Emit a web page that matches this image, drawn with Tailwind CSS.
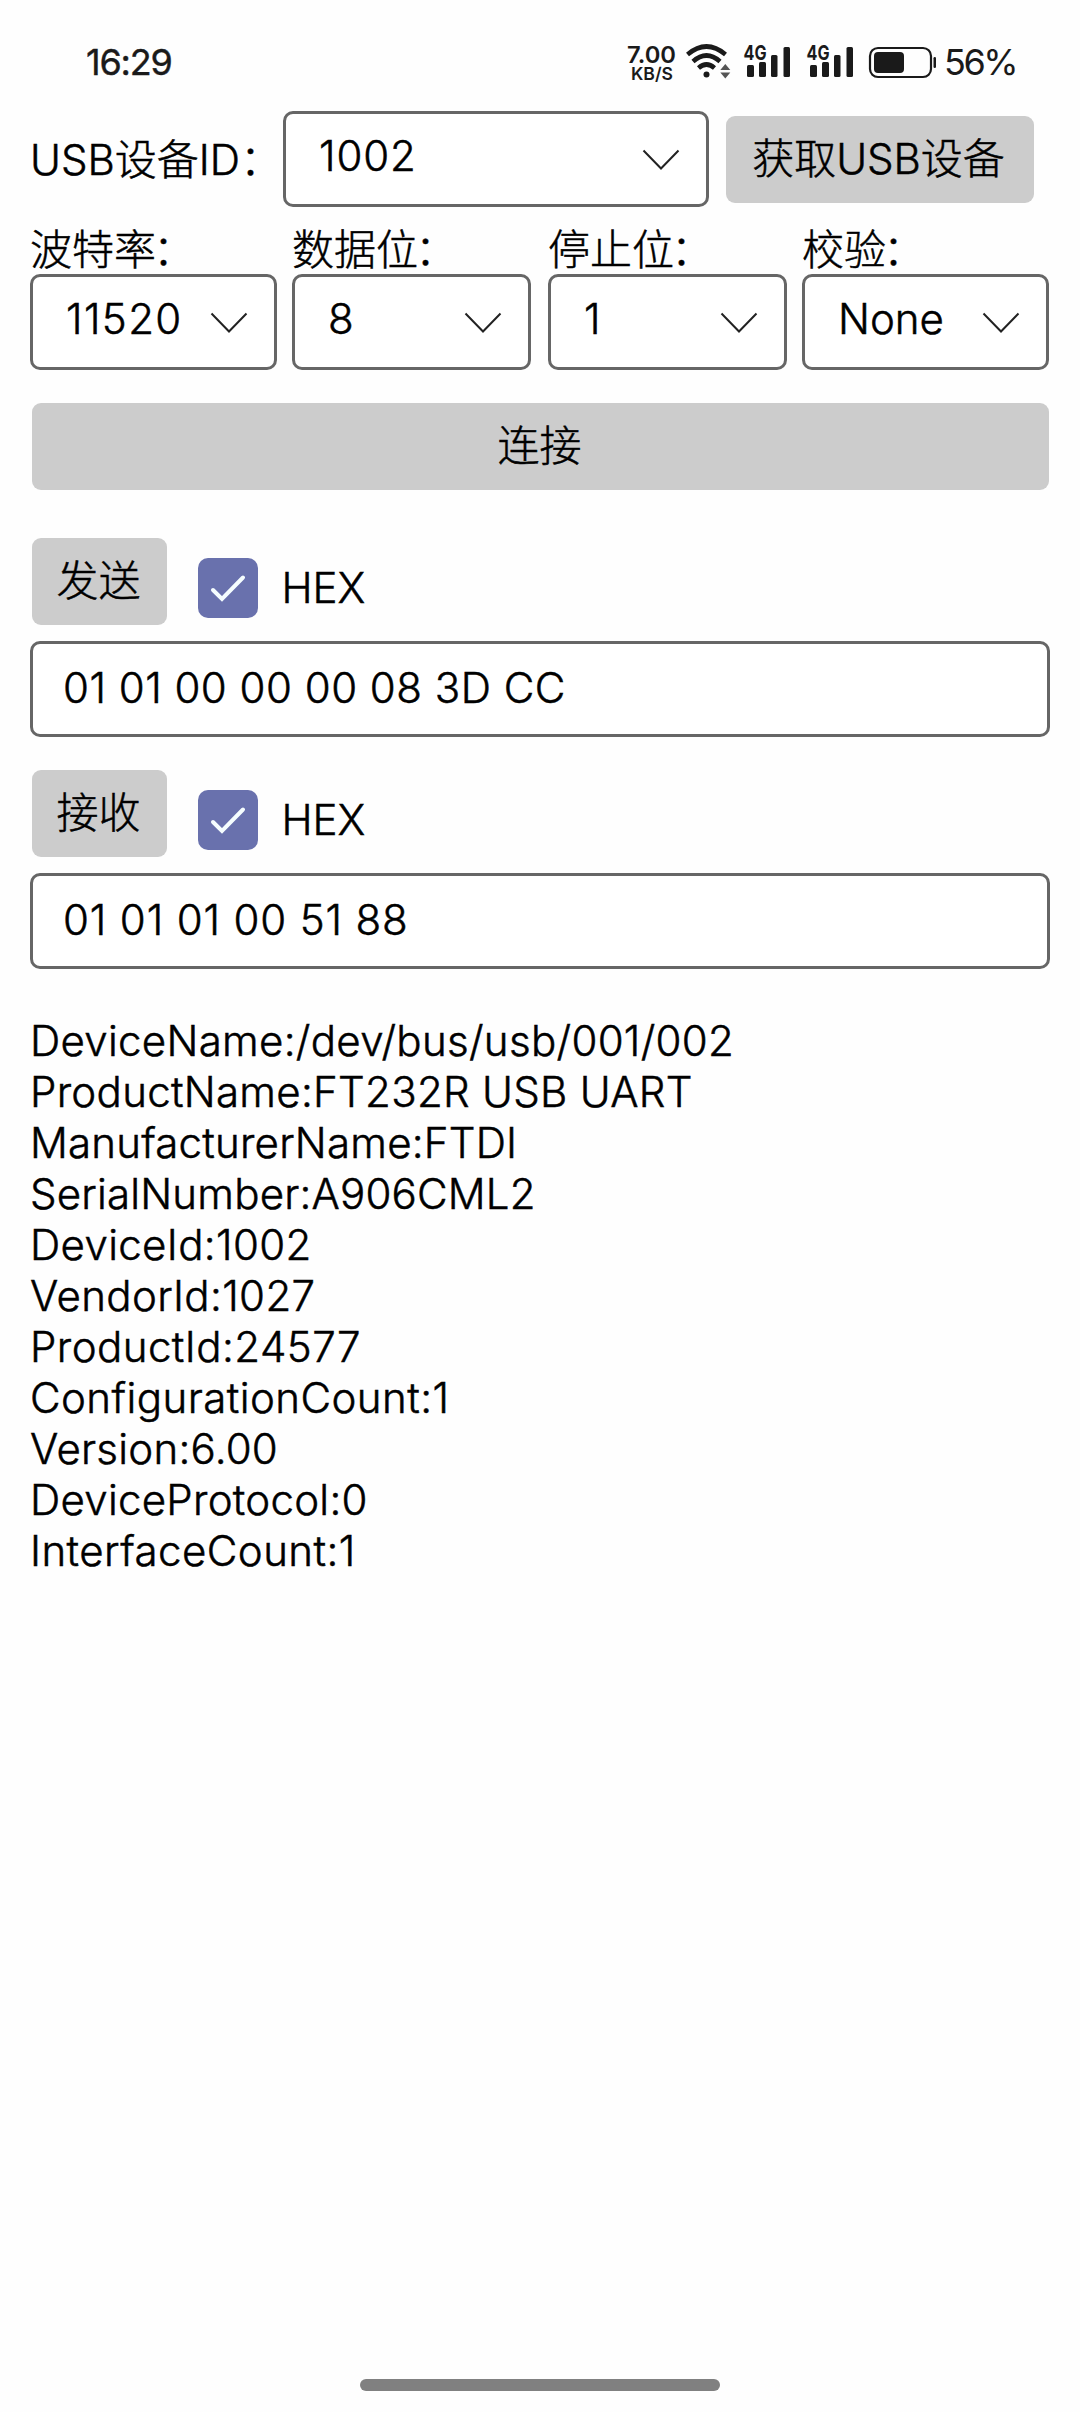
<!DOCTYPE html>
<html lang="zh-CN">
<head>
<meta charset="utf-8">
<title>USB</title>
<script src="https://cdn.jsdelivr.net/npm/@tailwindcss/browser@4"></script>
</head>
<body class="bg-[#fefefe]">
<div class="flex h-[2412px] w-[1080px] flex-col overflow-hidden font-['Inter','Noto_Sans_CJK_SC',sans-serif] text-[42px] leading-[51px] font-light text-black">
  <header class="flex h-[111px] shrink-0 items-start justify-between pt-[40px] pl-[86px] text-[36px] leading-[44px] font-normal text-[#1a1a1a]">
    <span class="tracking-[-1.2px] [-webkit-text-stroke:0.4px]">16:29</span>
    <div class="flex w-[454px] items-start">
      <svg class="h-[44px] w-[316px] shrink-0" viewBox="626 40 316 44" fill="#1a1a1a">
        <text x="627" y="62.500" font-size="23.500" font-weight="600" textLength="49" lengthAdjust="spacingAndGlyphs">7.00</text>
        <text x="631" y="80" font-size="17.5" font-weight="600" textLength="42" lengthAdjust="spacingAndGlyphs">KB/S</text>
        <g fill="none" stroke="#1a1a1a" stroke-width="4.6">
          <path d="M687.5 54.5Q706.500 38.500 725.500 54.500"/>
          <path d="M693 61.500Q706.500 49.500 720 61.500"/>
          <path d="M698.500 68Q706.500 61 714.500 68"/>
        </g>
        <circle cx="706.500" cy="74.500" r="3"/>
        <path d="M725.300 64l5 6h-10zM725.300 78.500l5-6h-10z" fill="#555"/>
        <g>
          <text x="743.500" y="60" font-size="20.500" font-weight="700" textLength="23" lengthAdjust="spacingAndGlyphs">4G</text>
          <rect x="747" y="65" width="7" height="12" rx="1.500"/>
          <rect x="759" y="62" width="7" height="15" rx="1.500"/>
          <rect x="771" y="55" width="6.500" height="22" rx="1.500"/>
          <rect x="783.500" y="47" width="6.500" height="30" rx="1.500"/>
        </g>
        <g transform="translate(63 0)">
          <text x="743.500" y="60" font-size="20.500" font-weight="700" textLength="23" lengthAdjust="spacingAndGlyphs">4G</text>
          <rect x="747" y="65" width="7" height="12" rx="1.500"/>
          <rect x="759" y="62" width="7" height="15" rx="1.500"/>
          <rect x="771" y="55" width="6.500" height="22" rx="1.500"/>
          <rect x="783.500" y="47" width="6.500" height="30" rx="1.500"/>
        </g>
        <rect x="870" y="48" width="61" height="29" rx="8" fill="none" stroke="#1a1a1a" stroke-width="2.200"/>
        <rect x="874" y="52" width="30" height="21" rx="4"/>
        <rect x="933.500" y="57" width="2.500" height="11" rx="1.200"/>
      </svg>
      <span class="pl-[2px] tracking-[-2.5px]">56%</span>
    </div>
  </header>

  <main class="flex flex-col px-[30px] [-webkit-text-stroke:0.5px]">
    <div class="flex h-[96px] items-start">
      <span class="w-[253px] shrink-0 pt-[23px] whitespace-nowrap">USB设备ID：</span>
      <div class="flex h-[96px] w-[426px] items-start justify-between rounded-[10px] border-[3px] border-[#666] bg-white pt-[16px] pr-[26px] pl-[33px]">
        <span class="tracking-[0.9px]">1002</span>
        <svg class="mt-[18px] h-[24px] w-[38px]" viewBox="0 0 38 24" fill="none" stroke="#222" stroke-width="2"><path d="M1.500 2.500L19 20.500L36.500 2.500"/></svg>
      </div>
      <button class="mt-[5px] ml-[16.500px] h-[87px] w-[308px] rounded-[9px] bg-[#ccc] pr-[2px] pb-[2px] whitespace-nowrap">获取USB设备</button>
    </div>

    <div class="mt-[16px] grid grid-cols-[247px_239px_239px_247px] gap-x-[16px]">
      <div>
        <div class="h-[51px] pt-px">波特率<span class="-ml-[3px]">：</span></div>
        <div class="flex h-[96px] items-start justify-between rounded-[10px] border-[3px] border-[#666] bg-white pt-[16px] pr-[26px] pl-[33px]">
          <span class="tracking-[1.4px]">11520</span>
          <svg class="mt-[18px] h-[24px] w-[38px] shrink-0" viewBox="0 0 38 24" fill="none" stroke="#222" stroke-width="2"><path d="M1.500 2.500L19 20.500L36.500 2.500"/></svg>
        </div>
      </div>
      <div class="-ml-px">
        <div class="h-[51px] pt-px">数据位<span class="-ml-[3px]">：</span></div>
        <div class="mr-px flex h-[96px] items-start justify-between rounded-[10px] border-[3px] border-[#666] bg-white pt-[16px] pr-[26px] pl-[33px]">
          <span>8</span>
          <svg class="mt-[18px] h-[24px] w-[38px] shrink-0" viewBox="0 0 38 24" fill="none" stroke="#222" stroke-width="2"><path d="M1.500 2.500L19 20.500L36.500 2.500"/></svg>
        </div>
      </div>
      <div>
        <div class="h-[51px] pt-px">停止位<span class="-ml-[3px]">：</span></div>
        <div class="flex h-[96px] items-start justify-between rounded-[10px] border-[3px] border-[#666] bg-white pt-[16px] pr-[26px] pl-[33px]">
          <span>1</span>
          <svg class="mt-[18px] h-[24px] w-[38px] shrink-0" viewBox="0 0 38 24" fill="none" stroke="#222" stroke-width="2"><path d="M1.500 2.500L19 20.500L36.500 2.500"/></svg>
        </div>
      </div>
      <div class="-ml-px">
        <div class="h-[51px] pt-px">校验<span class="-ml-[3px]">：</span></div>
        <div class="mr-px flex h-[96px] items-start justify-between rounded-[10px] border-[3px] border-[#666] bg-white pt-[16px] pr-[26px] pl-[33px]">
          <span>None</span>
          <svg class="mt-[18px] h-[24px] w-[38px] shrink-0" viewBox="0 0 38 24" fill="none" stroke="#222" stroke-width="2"><path d="M1.500 2.500L19 20.500L36.500 2.500"/></svg>
        </div>
      </div>
    </div>

    <button class="mx-[1.500px] mt-[33px] h-[87px] rounded-[9px] bg-[#ccc] pr-px pb-[2px]">连接</button>

    <div class="mt-[48px] flex h-[103px] items-start pl-[1.500px]">
      <button class="h-[87px] w-[135px] rounded-[9px] bg-[#ccc] pr-px pb-[2px]">发送</button>
      <span class="mt-[20px] ml-[31px] flex size-[60px] items-center justify-center rounded-[10px] bg-[#6971ad]">
        <svg class="size-[60px]" viewBox="0 0 60 60" fill="none" stroke="#f5fdff" stroke-width="4" stroke-linecap="round"><path d="M15 32L24 41L45 19.500"/></svg>
      </span>
      <span class="mt-[24px] ml-[24px]">HEX</span>
    </div>
    <div class="h-[96px] rounded-[10px] border-[3px] border-[#666] bg-white pt-[18px] pl-[30px] tracking-[0.48px] whitespace-pre">01 01 00 00 00 08 3D CC</div>

    <div class="mt-[33px] flex h-[103px] items-start pl-[1.500px]">
      <button class="h-[87px] w-[135px] rounded-[9px] bg-[#ccc] pr-px pb-[2px]">接收</button>
      <span class="mt-[20px] ml-[31px] flex size-[60px] items-center justify-center rounded-[10px] bg-[#6971ad]">
        <svg class="size-[60px]" viewBox="0 0 60 60" fill="none" stroke="#f5fdff" stroke-width="4" stroke-linecap="round"><path d="M15 32L24 41L45 19.500"/></svg>
      </span>
      <span class="mt-[24px] ml-[24px]">HEX</span>
    </div>
    <div class="h-[96px] rounded-[10px] border-[3px] border-[#666] bg-white pt-[18px] pl-[30px] tracking-[0.85px] whitespace-pre">01 01 01 00 51 88</div>

    <div class="mt-[46px] flex flex-col">
      <span class="tracking-[0.3px]">DeviceName:/dev/bus/usb/001/002</span>
      <span class="tracking-[0.3px]">ProductName:FT232R USB UART</span>
      <span class="tracking-[0.22px]">ManufacturerName:FTDI</span>
      <span class="tracking-[0.2px]">SerialNumber:A906CML2</span>
      <span class="tracking-[0.35px]">DeviceId:1002</span>
      <span class="tracking-[0.35px]">VendorId:1027</span>
      <span class="tracking-[0.45px]">ProductId:24577</span>
      <span class="tracking-[0.45px]">ConfigurationCount:1</span>
      <span class="tracking-[0.25px]">Version:6.00</span>
      <span class="tracking-[0.27px]">DeviceProtocol:0</span>
      <span class="tracking-[0.45px]">InterfaceCount:1</span>
    </div>
  </main>
  <div class="mx-auto mt-auto mb-[21px] h-[12px] w-[360px] shrink-0 rounded-full bg-[#808080]"></div>
</div>
</body>
</html>
